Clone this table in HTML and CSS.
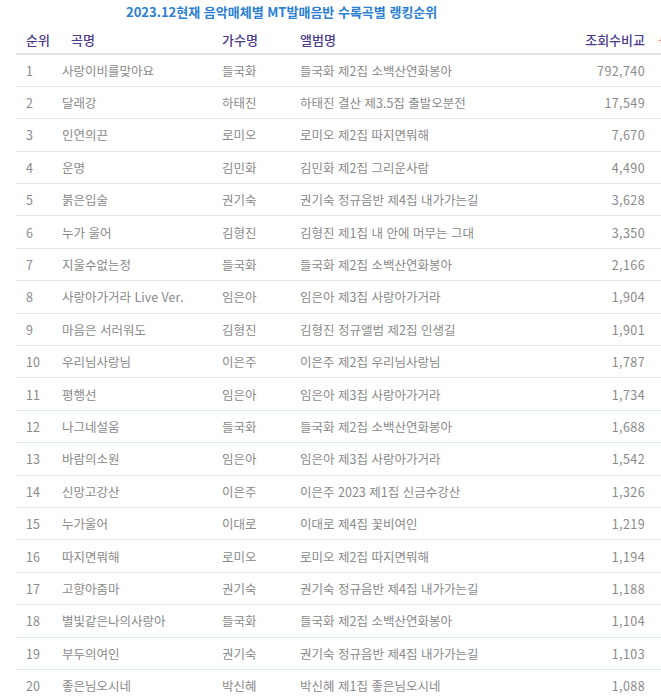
FILE: index.html
```html
<!DOCTYPE html>
<html lang="ko">
<head>
<meta charset="utf-8">
<link rel="stylesheet" href="styles.css">
</head>
<body>
<div class="wrap">
  <h1 class="title">2023.12현재 음악매체별 MT발매음반 수록곡별 랭킹순위</h1>
  <table class="rank">
    <colgroup>
      <col class="w-rank"><col class="w-song"><col class="w-artist"><col class="w-album"><col class="w-num"><col class="w-extra">
    </colgroup>
    <thead>
      <tr>
        <th class="c-rank">순위</th>
        <th class="c-song h-song">곡명</th>
        <th>가수명</th>
        <th>앨범명</th>
        <th class="c-num">조회수비교</th>
        <th class="c-extra">+</th>
      </tr>
    </thead>
    <tbody>
      <tr><td class="c-rank">1</td><td>사랑이비를맞아요</td><td>들국화</td><td>들국화 제2집 소백산연화봉아</td><td class="c-num">792,740</td><td></td></tr>
      <tr><td class="c-rank">2</td><td>달래강</td><td>하태진</td><td>하태진 결산 제3.5집 출발오분전</td><td class="c-num">17,549</td><td></td></tr>
      <tr><td class="c-rank">3</td><td>인연의끈</td><td>로미오</td><td>로미오 제2집 따지면뭐해</td><td class="c-num">7,670</td><td></td></tr>
      <tr><td class="c-rank">4</td><td>운명</td><td>김민화</td><td>김민화 제2집 그리운사람</td><td class="c-num">4,490</td><td></td></tr>
      <tr><td class="c-rank">5</td><td>붉은입술</td><td>권기숙</td><td>권기숙 정규음반 제4집 내가가는길</td><td class="c-num">3,628</td><td></td></tr>
      <tr><td class="c-rank">6</td><td>누가 울어</td><td>김형진</td><td>김형진 제1집 내 안에 머무는 그대</td><td class="c-num">3,350</td><td></td></tr>
      <tr><td class="c-rank">7</td><td>지울수없는정</td><td>들국화</td><td>들국화 제2집 소백산연화봉아</td><td class="c-num">2,166</td><td></td></tr>
      <tr><td class="c-rank">8</td><td>사랑아가거라 Live Ver.</td><td>임은아</td><td>임은아 제3집 사랑아가거라</td><td class="c-num">1,904</td><td></td></tr>
      <tr><td class="c-rank">9</td><td>마음은 서러워도</td><td>김형진</td><td>김형진 정규앨범 제2집 인생길</td><td class="c-num">1,901</td><td></td></tr>
      <tr><td class="c-rank">10</td><td>우리님사랑님</td><td>이은주</td><td>이은주 제2집 우리님사랑님</td><td class="c-num">1,787</td><td></td></tr>
      <tr><td class="c-rank">11</td><td>평행선</td><td>임은아</td><td>임은아 제3집 사랑아가거라</td><td class="c-num">1,734</td><td></td></tr>
      <tr><td class="c-rank">12</td><td>나그네설움</td><td>들국화</td><td>들국화 제2집 소백산연화봉아</td><td class="c-num">1,688</td><td></td></tr>
      <tr><td class="c-rank">13</td><td>바람의소원</td><td>임은아</td><td>임은아 제3집 사랑아가거라</td><td class="c-num">1,542</td><td></td></tr>
      <tr><td class="c-rank">14</td><td>신망고강산</td><td>이은주</td><td>이은주 2023 제1집 신금수강산</td><td class="c-num">1,326</td><td></td></tr>
      <tr><td class="c-rank">15</td><td>누가울어</td><td>이대로</td><td>이대로 제4집 꽃비여인</td><td class="c-num">1,219</td><td></td></tr>
      <tr><td class="c-rank">16</td><td>따지면뭐해</td><td>로미오</td><td>로미오 제2집 따지면뭐해</td><td class="c-num">1,194</td><td></td></tr>
      <tr><td class="c-rank">17</td><td>고향아줌마</td><td>권기숙</td><td>권기숙 정규음반 제4집 내가가는길</td><td class="c-num">1,188</td><td></td></tr>
      <tr><td class="c-rank">18</td><td>별빛같은나의사랑아</td><td>들국화</td><td>들국화 제2집 소백산연화봉아</td><td class="c-num">1,104</td><td></td></tr>
      <tr><td class="c-rank">19</td><td>부두의여인</td><td>권기숙</td><td>권기숙 정규음반 제4집 내가가는길</td><td class="c-num">1,103</td><td></td></tr>
      <tr><td class="c-rank">20</td><td>좋은님오시네</td><td>박신혜</td><td>박신혜 제1집 좋은님오시네</td><td class="c-num">1,088</td><td></td></tr>
    </tbody>
  </table>
</div>
</body>
</html>
```

FILE: styles.css
```css
html, body {
  margin: 0;
  padding: 0;
  background: #ffffff;
  overflow: hidden;
}
body {
  font-family: "Noto Sans CJK KR", "Noto Sans", sans-serif;
}
.wrap {
  width: 700px;
}
.title {
  margin: 0;
  padding: 3px 0 0 126px;
  height: 22px;
  font-size: 13px;
  font-weight: 700;
  line-height: 17px;
  color: #2a7fd2;
}
.rank {
  margin-left: 16px;
  border-collapse: collapse;
  table-layout: fixed;
  width: 684px;
}
.w-rank { width: 46px; }
.w-song { width: 160px; }
.w-artist { width: 78px; }
.w-album { width: 250px; }
.w-num { width: 98px; }
.w-extra { width: 52px; }
.rank th,
.rank td {
  box-sizing: border-box;
  padding: 0;
  text-align: left;
  vertical-align: middle;
  white-space: nowrap;
}
.rank th {
  height: 29px;
  font-size: 13px;
  font-weight: 500;
  color: #4b3a8e;
  border-bottom: 2px solid #e3e3e3;
}
.rank td {
  height: 32.4px;
  font-size: 12.5px;
  color: #8a8a8a;
  border-bottom: 1px solid #dde7f0;
}
.rank .c-rank { padding-left: 10px; }
.rank .h-song { padding-left: 9px; }
.rank .c-num { text-align: right; padding-right: 3px; letter-spacing: 0.4px; }
.rank th.c-num { letter-spacing: 0; }
.rank .c-extra { padding-left: 10px; color: #e87aa0; font-weight: 400; font-size: 12px; }
```
